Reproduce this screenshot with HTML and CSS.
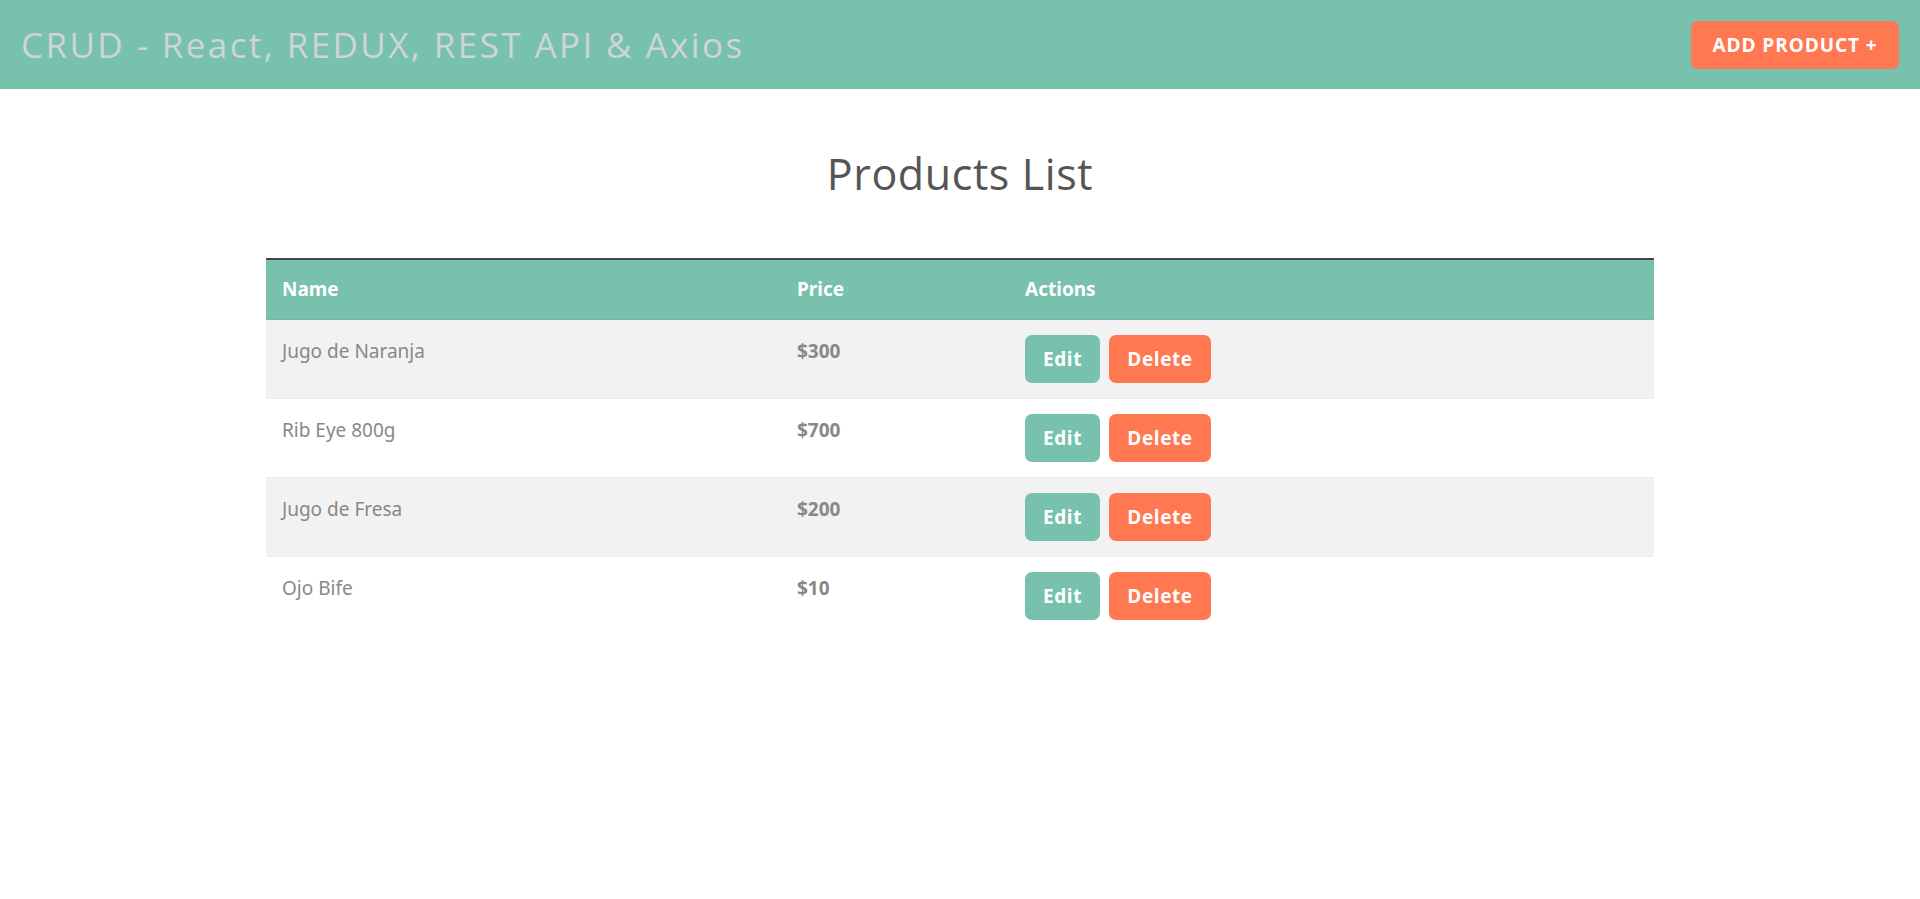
FILE: index.html
```html
<!DOCTYPE html>
<html lang="en">
<head>
<meta charset="utf-8">
<title>CRUD - React, REDUX, REST API &amp; Axios</title>
<link rel="stylesheet" href="styles.css">
</head>
<body>
<header class="navbar">
  <h1 class="brand">CRUD - React, REDUX, REST API &amp; Axios</h1>
  <a class="btn btn-add" href="#">ADD PRODUCT +</a>
</header>
<main class="container">
  <h2 class="page-title">Products List</h2>
  <table class="products">
    <thead>
      <tr>
        <th class="col-name">Name</th>
        <th class="col-price">Price</th>
        <th class="col-actions">Actions</th>
      </tr>
    </thead>
    <tbody>
      <tr>
        <td>Jugo de Naranja</td>
        <td class="price">$300</td>
        <td class="actions"><a class="btn btn-edit" href="#">Edit</a><button class="btn btn-delete">Delete</button></td>
      </tr>
      <tr>
        <td>Rib Eye 800g</td>
        <td class="price">$700</td>
        <td class="actions"><a class="btn btn-edit" href="#">Edit</a><button class="btn btn-delete">Delete</button></td>
      </tr>
      <tr>
        <td>Jugo de Fresa</td>
        <td class="price">$200</td>
        <td class="actions"><a class="btn btn-edit" href="#">Edit</a><button class="btn btn-delete">Delete</button></td>
      </tr>
      <tr>
        <td>Ojo Bife</td>
        <td class="price">$10</td>
        <td class="actions"><a class="btn btn-edit" href="#">Edit</a><button class="btn btn-delete">Delete</button></td>
      </tr>
    </tbody>
  </table>
</main>
</body>
</html>
```

FILE: styles.css
```css
* { box-sizing: border-box; }
html, body { margin: 0; padding: 0; }
body {
  font-family: "Open Sans", "Noto Sans", sans-serif;
  background: #fff;
  color: #555;
}
.navbar {
  height: 89px;
  background: #78c1ad;
  display: flex;
  align-items: center;
  justify-content: space-between;
  padding: 0 21px;
}
.brand {
  margin: 0;
  font-family: "Open Sans", sans-serif;
  font-weight: 400;
  font-size: 35px;
  letter-spacing: 2.4px;
  color: #cfd4d6;
}
.btn {
  display: inline-flex;
  align-items: center;
  justify-content: center;
  border: none;
  border-radius: 7px;
  color: #fff;
  font-family: "Open Sans", sans-serif;
  font-weight: 700;
  text-decoration: none;
  cursor: pointer;
}
.btn-add {
  height: 48px;
  width: 208px;
  background: #ff7852;
  font-size: 19px;
  letter-spacing: 0.9px;
}
.container {
  width: 1388px;
  margin: 0 auto;
}
.page-title {
  margin: 0 0 56px;
  padding-top: 57px;
  text-align: center;
  font-weight: 400;
  font-size: 43px;
  line-height: 56px;
  letter-spacing: 0.6px;
  color: #555;
}
.products {
  width: 100%;
  border-collapse: collapse;
  border-top: 2px solid #444;
  font-family: "Noto Sans", "Open Sans", sans-serif;
  font-size: 19px;
}
.products thead tr {
  background: #78c1ad;
  height: 60px;
}
.products th {
  text-align: left;
  color: #fff;
  font-weight: 700;
  font-size: 19px;
  padding: 0 16px;
  border-bottom: 1px solid #6fb9a5;
}
.col-name { width: 515px; }
.col-price { width: 228px; }
.products td {
  height: 79px;
  padding: 19px 16px 0;
  vertical-align: top;
  color: #888;
  line-height: 24px;
}
.products tbody tr:nth-child(odd) { background: #f2f2f2; }
.products tbody tr + tr { border-top: 1px solid #ececec; }
.products td.price { font-weight: 700; }
.products td.actions { padding-top: 15px; }
.btn-edit, .btn-delete {
  height: 48px;
  font-size: 19px;
  letter-spacing: 0.6px;
  vertical-align: top;
}
.btn-edit {
  width: 75px;
  background: #78c1ad;
  margin-right: 9px;
}
.btn-delete {
  width: 102px;
  background: #ff7852;
}
```
